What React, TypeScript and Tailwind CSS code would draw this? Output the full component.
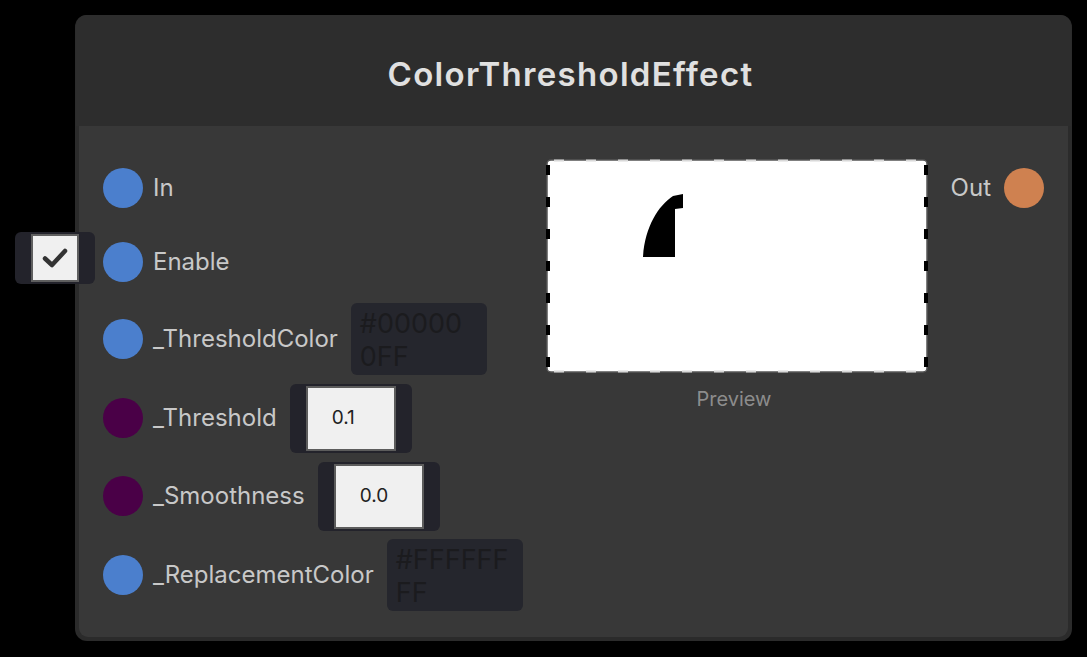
const ports = {
  blue: "bg-[#4b7fcd]",
  purple: "bg-[#4a0047]",
};

const Port = ({ color }: { color: string }) => (
  <div className={`w-10 h-10 rounded-full shrink-0 ${color}`} />
);

const ColorField = ({ lines }: { lines: string[] }) => (
  <div className="w-[136px] h-[72px] rounded-md bg-[#25262d] pl-[9px] pt-[4px] text-[27px] leading-[33px] text-[#1b1b1e]">
    {lines.map((l) => (
      <div key={l}>{l}</div>
    ))}
  </div>
);

const NumberField = ({ value }: { value: string }) => (
  <div className="w-[122px] h-[69px] rounded-md bg-[#23232b] pl-4 pt-[2px]">
    <div className="w-[90px] h-[65px] bg-[#f0f0f0] border-2 border-[#5c5c5c] flex items-center pl-[24px] text-[19px] text-[#222]">
      {value}
    </div>
  </div>
);

const PreviewImage = () => (
  <svg width="382" height="214" viewBox="0 0 382 214">
    <rect x="1" y="1" width="380" height="212" rx="4" fill="#fff" stroke="#555" strokeWidth="1.5" />
    <line x1="2" y1="6" x2="2" y2="212" stroke="#000" strokeWidth="4" strokeDasharray="10 22" />
    <line x1="380" y1="6" x2="380" y2="212" stroke="#000" strokeWidth="4" strokeDasharray="10 22" />
    <line x1="8" y1="1.5" x2="376" y2="1.5" stroke="#d8d8d8" strokeWidth="2" strokeDasharray="10 22" />
    <line x1="8" y1="212.5" x2="376" y2="212.5" stroke="#d8d8d8" strokeWidth="2" strokeDasharray="10 22" />
    <path d="M97 98 L129 98 L129 50 L137 49 L137 35 L127 37 C112 47 99 68 97 98 Z" fill="#000" />
  </svg>
);

export default function App() {
  return (
    <div className="w-[1087px] h-[657px] bg-black relative font-['Inter','Noto_Sans',sans-serif]">
      <div className="absolute left-[75px] top-[15px] w-[997px] h-[626px] rounded-[12px] bg-[#2b2b2b] p-[4px] pt-0 flex flex-col">
        {/* header */}
        <div className="h-[111px] bg-[#2d2d2d] rounded-t-[10px] flex items-center justify-center pt-[8px] pr-[6px] -mx-[3px]">
          <h1 className="text-[33px] font-semibold text-[#e0e0e0] tracking-[1.3px]">ColorThresholdEffect</h1>
        </div>

        {/* body */}
        <div className="flex-1 bg-[#383838] rounded-b-[9px] flex px-6">
          <div className="w-[443px] pt-[26px] flex flex-col text-[24px] text-[#c8c8c8]">
            <div className="h-[72px] flex items-center gap-[10px]">
              <Port color={ports.blue} />
              <span>In</span>
            </div>
            <div className="h-[76px] flex items-center gap-[10px] relative">
              <div className="absolute left-[-88px] top-[8px] w-[80px] h-[52px] rounded-md bg-[#23232b] pl-4 pt-[2px]">
                <div className="w-[48px] h-[48px] bg-[#f0f0f0] border-2 border-[#5f5f5f] flex items-center justify-center">
                  <svg width="32" height="32" viewBox="0 0 32 32">
                    <polyline points="6,16.5 13,23 26,9" fill="none" stroke="#333" strokeWidth="4.5" strokeLinecap="round" strokeLinejoin="round" />
                  </svg>
                </div>
              </div>
              <Port color={ports.blue} />
              <span>Enable</span>
            </div>
            <div className="h-[78px] flex items-center gap-[10px]">
              <Port color={ports.blue} />
              <span className="mr-[3px]">_ThresholdColor</span>
              <ColorField lines={["#00000", "0FF"]} />
            </div>
            <div className="h-[80px] flex items-center gap-[10px]">
              <Port color={ports.purple} />
              <span className="mr-[3px]">_Threshold</span>
              <NumberField value="0.1" />
            </div>
            <div className="h-[76px] flex items-center gap-[10px]">
              <Port color={ports.purple} />
              <span className="mr-[3px]">_Smoothness</span>
              <NumberField value="0.0" />
            </div>
            <div className="h-[82px] flex items-center gap-[10px]">
              <Port color={ports.blue} />
              <span className="mr-[3px]">_ReplacementColor</span>
              <ColorField lines={["#FFFFFF", "FF"]} />
            </div>
          </div>

          <div className="w-[382px] pt-[33px] flex flex-col items-center">
            <PreviewImage />
            <span className="mt-[11px] mr-[6px] text-[20px] text-[#8c8c8c]">Preview</span>
          </div>

          <div className="flex-1 pt-[42px]">
            <div className="flex items-center justify-end gap-[13px] text-[24px] text-[#c8c8c8]">
              <span>Out</span>
              <Port color="bg-[#cf8150]" />
            </div>
          </div>
        </div>
      </div>
    </div>
  );
}
